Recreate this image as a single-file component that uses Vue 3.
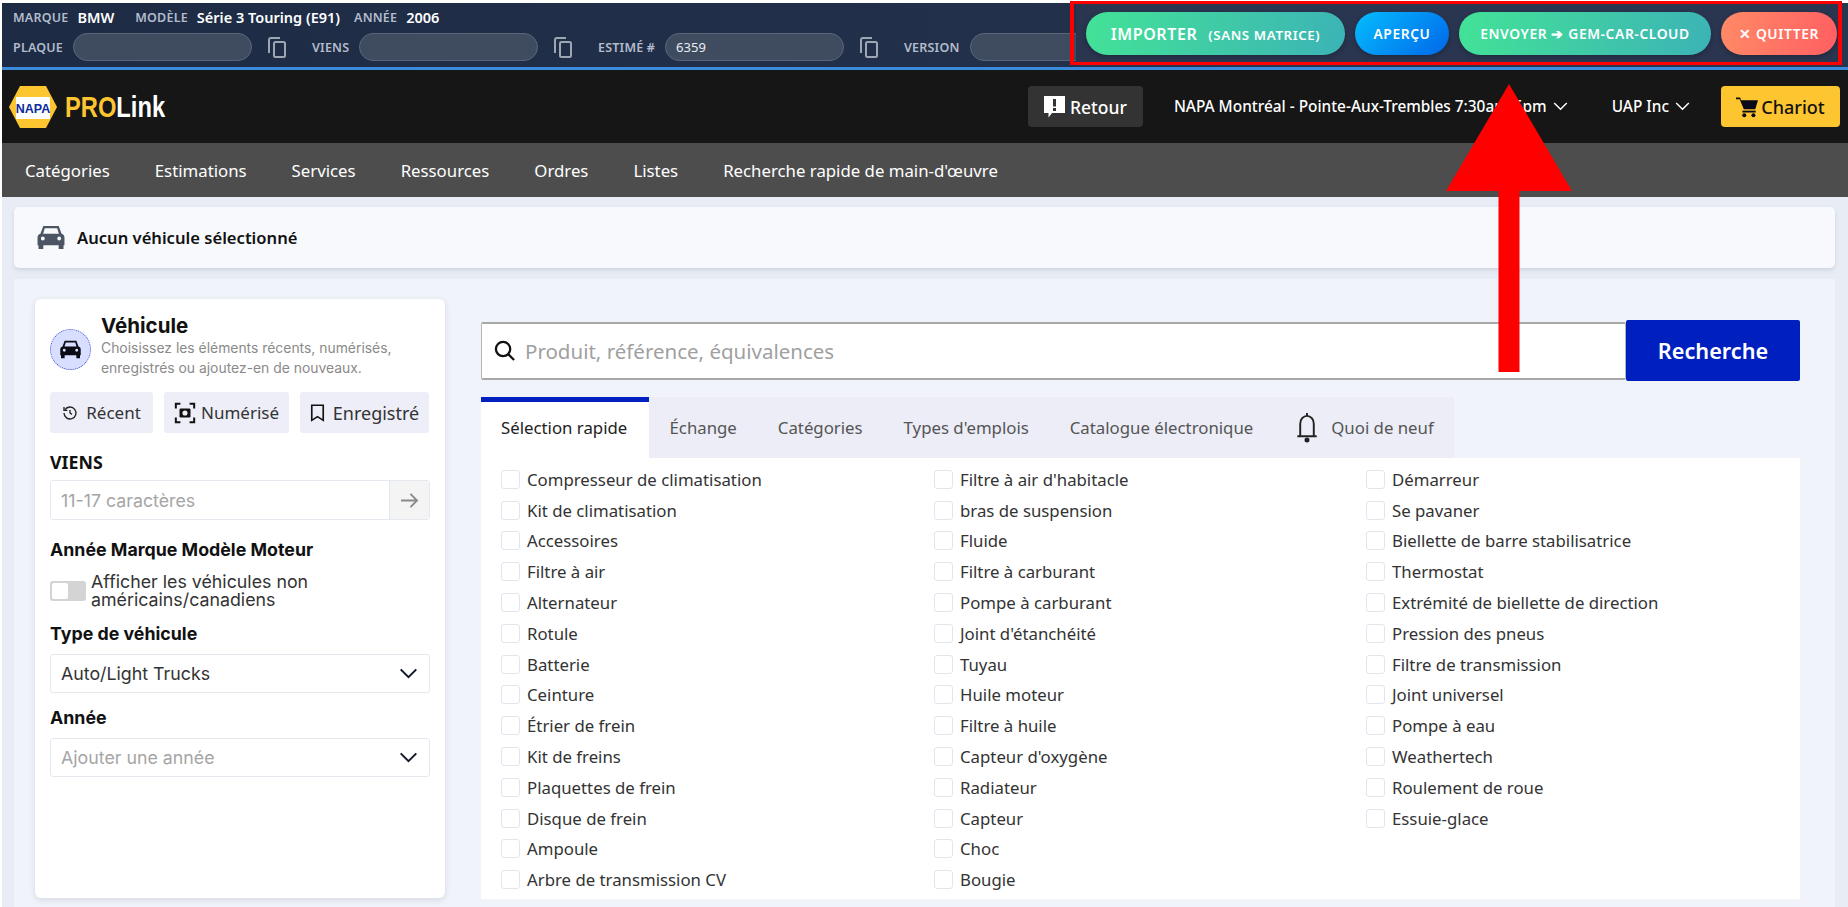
<template>
  <div class="page">
    <div class="topbar">
      <div class="top-info">
        <div class="info-row">
          <span class="lbl">MARQUE</span><b class="val val-marque">BMW</b>
          <span class="lbl">MODÈLE</span><b class="val val-modele">Série 3 Touring (E91)</b>
          <span class="lbl">ANNÉE</span><b class="val">2006</b>
        </div>
        <div class="field-row">
          <div v-for="f in topFields" :key="f.label" class="field" :class="f.cls">
            <span class="lbl">{{ f.label }}</span>
            <div class="pill">{{ f.value }}</div>
            <svg class="copy" viewBox="0 0 18 21" width="18" height="21" fill="none" stroke="#9ea6b4" stroke-width="2">
              <path d="M12 1H3a2 2 0 0 0-2 2v13" />
              <rect x="6" y="5" width="11" height="15" rx="1.500" />
            </svg>
          </div>
        </div>
      </div>
      <div class="actions">
        <button class="act act-import"><span class="big">IMPORTER</span><span class="small">(SANS MATRICE)</span></button>
        <button class="act act-preview">APERÇU</button>
        <button class="act act-send">ENVOYER ➔ GEM-CAR-CLOUD</button>
        <button class="act act-quit">✕ QUITTER</button>
      </div>
    </div>

    <header class="header">
      <div class="logo">
        <svg viewBox="0 0 48 42" width="48" height="42">
          <polygon points="11,0 37,0 48,21 37,42 11,42 0,21" fill="#fdc52f" />
          <rect x="7" y="11" width="34" height="22" fill="#fff" />
          <text x="24" y="27" text-anchor="middle" class="napa">NAPA</text>
        </svg>
        <span class="brand"><span class="pro">PRO</span>Link</span>
      </div>
      <div class="head-right">
        <button class="retour">
          <svg viewBox="0 0 21 22" width="21" height="22">
            <path d="M0 0h21v17H8l-3.500 4.500V17H0z" fill="#fff" />
            <rect x="9" y="3" width="3" height="7.500" fill="#333" />
            <rect x="9" y="12" width="3" height="3" fill="#333" />
          </svg>
          Retour
        </button>
        <div class="drop store">
          NAPA Montréal - Pointe-Aux-Trembles 7:30am-5pm
          <svg viewBox="0 0 16 10" width="15" height="9" fill="none" stroke="#fff" stroke-width="1.6"><path d="M1 1l7 7 7-7" /></svg>
        </div>
        <div class="drop uap">
          UAP Inc
          <svg viewBox="0 0 16 10" width="15" height="9" fill="none" stroke="#fff" stroke-width="1.6"><path d="M1 1l7 7 7-7" /></svg>
        </div>
        <button class="cart">
          <svg viewBox="0 0 24 24" width="22" height="22" fill="#0a0a1a">
            <path d="M0 1.500h4.500l1 3H24l-3 10H8.500L4 3.500H0z" />
            <rect x="7" y="16" width="14.500" height="2" />
            <circle cx="9" cy="21" r="2.200" />
            <circle cx="19" cy="21" r="2.200" />
          </svg>
          Chariot
        </button>
      </div>
    </header>

    <nav class="nav">
      <a v-for="n in navItems" :key="n">{{ n }}</a>
    </nav>

    <main class="content">
      <div class="vehicle-bar">
        <svg viewBox="0 0 28 26" width="28" height="25" fill="#4b5563">
          <path fill-rule="evenodd" d="M6 1h16l3 8c2 .6 3 2 3 4v8h-1v4h-5v-4H6v4H1v-4H0v-8c0-2 1-3.400 3-4zM7.500 3.500 5.800 9h16.400l-1.700-5.500zM5.500 12a2 2 0 1 0 0 4 2 2 0 0 0 0-4zm17 0a2 2 0 1 0 0 4 2 2 0 0 0 0-4z" />
        </svg>
        <span>Aucun véhicule sélectionné</span>
      </div>

      <div class="panel">
        <aside class="side">
          <div class="side-head">
            <div class="circle">
              <svg viewBox="0 0 28 26" width="21" height="19" fill="#0b0b14">
                <path fill-rule="evenodd" d="M6 1h16l3 8c2 .6 3 2 3 4v8h-1v4h-5v-4H6v4H1v-4H0v-8c0-2 1-3.400 3-4zM7.500 3.500 5.800 9h16.400l-1.700-5.500zM5.500 12a2 2 0 1 0 0 4 2 2 0 0 0 0-4zm17 0a2 2 0 1 0 0 4 2 2 0 0 0 0-4z" />
              </svg>
            </div>
            <div>
              <h2>Véhicule</h2>
              <p>Choisissez les éléments récents, numérisés, enregistrés ou ajoutez-en de nouveaux.</p>
            </div>
          </div>

          <div class="side-btns">
            <button class="b-recent">
              <svg viewBox="0 0 24 24" width="16" height="16" fill="none" stroke="#222" stroke-width="2">
                <path d="M4.500 7A9 9 0 1 1 3 12" /><path d="M3 3v5h5" /><path d="M12 7.500V12l3 2" />
              </svg>
              Récent
            </button>
            <button class="b-scan">
              <svg viewBox="0 0 24 24" width="22" height="22" fill="none" stroke="#111" stroke-width="2.200">
                <path d="M2 7V2h5M17 2h5v5M22 17v5h-5M7 22H2v-5" />
                <rect x="6" y="7" width="12" height="10" rx="1.500" fill="#111" stroke="none" />
                <circle cx="12" cy="12" r="2.800" fill="#eeeef8" stroke="none" />
              </svg>
              Numérisé
            </button>
            <button class="b-saved">
              <svg viewBox="0 0 18 22" width="15" height="18" fill="none" stroke="#111" stroke-width="2">
                <path d="M2 1.500h14V20l-7-4.500L2 20z" />
              </svg>
              Enregistré
            </button>
          </div>

          <label class="lab lab-vin">VIENS</label>
          <div class="vin">
            <span class="ph">11-17 caractères</span>
            <div class="vin-go">
              <svg viewBox="0 0 20 18" width="19" height="17" fill="none" stroke="#8a8a8a" stroke-width="2"><path d="M1 9h17M11 2l7 7-7 7" /></svg>
            </div>
          </div>

          <label class="lab lab-ymm">Année Marque Modèle Moteur</label>
          <div class="toggle-row">
            <span class="toggle"><i></i></span>
            <span class="toggle-txt">Afficher les véhicules non américains/canadiens</span>
          </div>

          <label class="lab lab-type">Type de véhicule</label>
          <div class="sel">
            <span>Auto/Light Trucks</span>
            <svg viewBox="0 0 20 12" width="19" height="11" fill="none" stroke="#111827" stroke-width="2.200"><path d="M1.500 1.500 10 10l8.500-8.500" /></svg>
          </div>

          <label class="lab lab-year">Année</label>
          <div class="sel">
            <span class="ph">Ajouter une année</span>
            <svg viewBox="0 0 20 12" width="19" height="11" fill="none" stroke="#111827" stroke-width="2.200"><path d="M1.500 1.500 10 10l8.500-8.500" /></svg>
          </div>
        </aside>

        <section class="main">
          <div class="search">
            <div class="search-box">
              <svg viewBox="0 0 22 22" width="21" height="21" fill="none" stroke="#111" stroke-width="2.400">
                <circle cx="9.500" cy="9.500" r="7.500" /><path d="M15 15l6 6" />
              </svg>
              <span>Produit, référence, équivalences</span>
            </div>
            <button class="search-btn">Recherche</button>
          </div>

          <div class="tabs">
            <div class="tab active">Sélection rapide</div>
            <div class="tab">Échange</div>
            <div class="tab">Catégories</div>
            <div class="tab">Types d'emplois</div>
            <div class="tab">Catalogue électronique</div>
            <div class="tab tab-new">
              <svg viewBox="0 0 24 32" width="26" height="31" fill="none" stroke="#222" stroke-width="2">
                <path d="M12 1v3M5 24V12a7 8 0 0 1 14 0v12M2 25h20" /><circle cx="12" cy="29" r="1.600" fill="#222" />
              </svg>
              Quoi de neuf
            </div>
          </div>

          <div class="checks">
            <label v-for="c in checks" :key="c" class="check">
              <span class="box"></span>{{ c }}
            </label>
          </div>
        </section>
      </div>
    </main>

    <div class="red-box"></div>
    <svg class="red-arrow" viewBox="0 0 126 288" width="126" height="288">
      <polygon points="63,0 126,107 73.500,107 73.500,288 52.500,288 52.500,107 0,107" fill="#ff0000" />
    </svg>
  </div>
</template>

<script setup>
const topFields = [
  { label: 'PLAQUE', value: '', cls: 'f-plaque' },
  { label: 'VIENS', value: '', cls: 'f-viens' },
  { label: 'ESTIMÉ #', value: '6359', cls: 'f-estime' },
  { label: 'VERSION', value: '', cls: 'f-version' }
]

const navItems = [
  'Catégories',
  'Estimations',
  'Services',
  'Ressources',
  'Ordres',
  'Listes',
  "Recherche rapide de main-d'œuvre"
]

const checks = [
  'Compresseur de climatisation', 'Kit de climatisation', 'Accessoires', 'Filtre à air', 'Alternateur',
  'Rotule', 'Batterie', 'Ceinture', 'Étrier de frein', 'Kit de freins', 'Plaquettes de frein',
  'Disque de frein', 'Ampoule', 'Arbre de transmission CV',
  "Filtre à air d'habitacle", 'bras de suspension', 'Fluide', 'Filtre à carburant', 'Pompe à carburant',
  "Joint d'étanchéité", 'Tuyau', 'Huile moteur', 'Filtre à huile', "Capteur d'oxygène", 'Radiateur',
  'Capteur', 'Choc', 'Bougie',
  'Démarreur', 'Se pavaner', 'Biellette de barre stabilisatrice', 'Thermostat',
  'Extrémité de biellette de direction', 'Pression des pneus', 'Filtre de transmission', 'Joint universel',
  'Pompe à eau', 'Weathertech', 'Roulement de roue', 'Essuie-glace'
]
</script>

<style>
html, body {
  margin: 0;
  background: #fff;
  overflow: hidden;
}
</style>

<style scoped>
.page {
  position: relative;
  width: 1848px;
  height: 907px;
  box-sizing: border-box;
  padding: 3px 0 0 2px;
  overflow: hidden;
  font-family: "Noto Sans", "Open Sans", sans-serif;
  color: #222;
}

button {
  border: none;
  font-family: inherit;
}

.topbar {
  display: flex;
  height: 64px;
  background: linear-gradient(90deg, #1d2b45, #27344f);
  border-bottom: 3px solid #3b8bdc;
  overflow: hidden;
}

.top-info {
  flex: 1;
  padding: 5px 0 0 11px;
  min-width: 0;
  overflow: hidden;
}

.info-row {
  display: flex;
  align-items: center;
  height: 18px;
  white-space: nowrap;
}

.lbl {
  color: #b3bccb;
  font-size: 12.500px;
  font-weight: 600;
  letter-spacing: 0.2px;
}

.val {
  color: #fff;
  font-size: 14.500px;
  font-weight: 600;
  margin-left: 9px;
}

.val-marque {
  margin-right: 21px;
}

.val-modele {
  margin-right: 14px;
}

.field-row {
  display: flex;
  align-items: center;
  margin-top: 7px;
}

.field {
  display: flex;
  align-items: center;
  flex: none;
}

.f-plaque {
  width: 299px;
}

.f-viens {
  width: 286px;
}

.f-estime {
  width: 306px;
}

.pill {
  width: 179px;
  height: 28px;
  box-sizing: border-box;
  margin-left: 10px;
  padding: 0 10px;
  line-height: 27px;
  font-size: 13px;
  color: #e8ecf2;
  background: #3f4c60;
  border: 1px solid #59667a;
  border-radius: 14px;
}

.copy {
  margin-left: 16px;
}

.actions {
  flex: none;
  width: 772px;
  height: 63px;
  box-sizing: border-box;
  display: flex;
  align-items: center;
  gap: 10px;
  padding: 0 5px 2px 10px;
  background: #2a3550;
}

.act {
  height: 43px;
  border-radius: 22px;
  color: #fff;
  font-weight: 600;
  font-size: 13.800px;
  letter-spacing: 0.6px;
  white-space: nowrap;
  padding: 0;
  box-shadow: 0 2px 5px rgba(0, 0, 0, 0.25);
}

.act-import {
  width: 259px;
  background: linear-gradient(100deg, #43e297, #3cb3b6);
}

.act-import .big {
  font-size: 16px;
  margin-right: 11px;
}

.act-import .small {
  font-size: 13.300px;
}

.act-preview {
  width: 94px;
  background: linear-gradient(135deg, #05bdfd, #0066ea);
}

.act-send {
  width: 252px;
  background: linear-gradient(100deg, #43e297, #3cb3b6);
}

.act-quit {
  width: 116px;
  background: linear-gradient(100deg, #ff8a66, #ff5f62);
}

.header {
  display: flex;
  align-items: center;
  justify-content: space-between;
  height: 73px;
  background: #161616;
  padding: 0 8px 0 7px;
}

.logo {
  display: flex;
  align-items: center;
  gap: 8px;
}

.napa {
  font-family: "Liberation Sans", sans-serif;
  font-size: 12.500px;
  font-weight: 700;
  fill: #0a2a9c;
}

.brand {
  display: block;
  width: 100px;
  color: #fff;
  font-family: "Liberation Sans", sans-serif;
  font-size: 30px;
  font-weight: 700;
  white-space: nowrap;
  transform: scaleX(0.79);
  transform-origin: left center;
}

.pro {
  color: #fdc52f;
}

.head-right {
  display: flex;
  align-items: center;
  height: 41px;
}

.retour {
  display: flex;
  align-items: center;
  justify-content: center;
  gap: 5px;
  width: 115px;
  height: 41px;
  background: #333;
  border-radius: 4px;
  color: #fff;
  font-size: 17.500px;
  font-weight: 500;
}

.drop {
  display: flex;
  align-items: center;
  gap: 6px;
  color: #fff;
  font-size: 15.400px;
  font-weight: 500;
  white-space: nowrap;
}

.store {
  margin-left: 31px;
}

.uap {
  margin-left: 44px;
}

.cart {
  display: flex;
  align-items: center;
  justify-content: center;
  gap: 3px;
  width: 119px;
  height: 41px;
  margin-left: 31px;
  background: #fdc52f;
  border-radius: 4px;
  color: #111;
  font-size: 18px;
  font-weight: 500;
}

.nav {
  display: flex;
  align-items: center;
  gap: 45px;
  height: 54px;
  padding-left: 23px;
  background: #4d4d4d;
}

.nav a {
  color: #fff;
  font-size: 16.800px;
  white-space: nowrap;
}

.content {
  height: 710px;
  padding: 10px 13px 0 12px;
  background: #e8edf5;
}

.vehicle-bar {
  display: flex;
  align-items: center;
  gap: 12px;
  height: 61px;
  padding-left: 23px;
  background: #f8f9fc;
  border-radius: 5px;
  box-shadow: 0 2px 4px rgba(60, 70, 100, 0.15);
  font-size: 16.600px;
  font-weight: 600;
  color: #111;
}

.panel {
  display: flex;
  align-items: flex-start;
  margin-top: 11px;
  padding: 20px 35px 0 21px;
  height: 640px;
  background: #f0f3f9;
}

.side {
  flex: none;
  width: 410px;
  height: 599px;
  box-sizing: border-box;
  padding: 15px 15px 0;
  background: #fff;
  border-radius: 6px;
  box-shadow: 0 2px 6px rgba(60, 70, 100, 0.15);
  font-family: Inter, "Noto Sans", sans-serif;
}

.side-head {
  display: flex;
  align-items: center;
  gap: 10px;
}

.circle {
  flex: none;
  width: 41px;
  height: 41px;
  box-sizing: border-box;
  display: flex;
  align-items: center;
  justify-content: center;
  margin-top: 6px;
  background: #d8deff;
  border: 1px dotted #4150d0;
  border-radius: 50%;
}

.side-head h2 {
  margin: 0;
  font-size: 20.500px;
  line-height: 24px;
  font-weight: 700;
  color: #111;
}

.side-head p {
  margin: 0;
  font-size: 13.900px;
  line-height: 20px;
  color: #8a8a8a;
}

.side-btns {
  display: flex;
  gap: 11px;
  margin-top: 14px;
}

.side-btns button {
  display: flex;
  align-items: center;
  justify-content: center;
  gap: 5px;
  height: 41px;
  background: #eeeef8;
  border-radius: 3px;
  color: #333;
  font-family: "Noto Sans", sans-serif;
  font-size: 17px;
  padding: 0;
}

.side-btns .b-recent {
  width: 103px;
  gap: 8px;
}

.b-scan {
  width: 125px;
}

.side-btns .b-saved {
  width: 129px;
  gap: 8px;
  font-size: 18px;
}

.lab {
  display: block;
  font-size: 17.800px;
  line-height: 20px;
  font-weight: 700;
  color: #111;
}

.lab-vin {
  margin-top: 19px;
  font-family: "Noto Sans", sans-serif;
}

.vin {
  display: flex;
  align-items: center;
  justify-content: space-between;
  height: 40px;
  margin-top: 8px;
  padding-left: 10px;
  border: 1px solid #e4e8ef;
  border-radius: 3px;
}

.ph {
  color: #a5a5a5;
}

.vin, .sel {
  box-sizing: border-box;
  font-size: 17.800px;
}

.vin-go {
  display: flex;
  align-items: center;
  justify-content: center;
  width: 39px;
  height: 38px;
  background: #f4f4f4;
  border-left: 1px solid #e4e8ef;
}

.lab-ymm {
  margin-top: 20px;
}

.toggle-row {
  display: flex;
  align-items: center;
  gap: 5px;
  margin-top: 13px;
  font-size: 17.800px;
  line-height: 18px;
  color: #333;
}

.toggle {
  flex: none;
  display: block;
  width: 36px;
  height: 20px;
  box-sizing: border-box;
  padding: 2px;
  background: #d4d4d4;
  border-radius: 3px;
}

.toggle i {
  display: block;
  width: 16px;
  height: 16px;
  background: #fff;
  border-radius: 2px;
}

.lab-type {
  margin-top: 15px;
}

.sel {
  display: flex;
  align-items: center;
  justify-content: space-between;
  height: 39px;
  margin-top: 10px;
  padding: 0 11px 0 10px;
  border: 1px solid #e4e8ef;
  border-radius: 3px;
  color: #333;
}

.lab-year {
  margin-top: 15px;
}

.main {
  flex: none;
  width: 1319px;
  margin-left: 36px;
  margin-top: 21px;
}

.search {
  display: flex;
  align-items: center;
}

.search-box {
  flex: 1;
  display: flex;
  align-items: center;
  gap: 10px;
  height: 58px;
  box-sizing: border-box;
  padding-left: 12px;
  background: #fff;
  border: 1px solid #b5b5b5;
  border-top: 2px solid #a8a8a8;
  border-bottom: 2px solid #a8a8a8;
  border-radius: 2px;
  font-size: 20.500px;
  color: #a0a0a0;
}

.search-btn {
  flex: none;
  width: 174px;
  height: 61px;
  background: #001fbf;
  border-radius: 2px;
  color: #fff;
  font-size: 21.700px;
  font-weight: 600;
}

.tabs {
  display: flex;
  width: 978px;
  height: 61px;
  margin-top: 16px;
  background: #ecedf7;
  width: 973px;
}

.tab {
  display: flex;
  align-items: center;
  padding: 0 20.500px;
  font-size: 16.800px;
  color: #555;
  white-space: nowrap;
}

.tab.active {
  width: 168px;
  box-sizing: border-box;
  padding: 0 0 5px 20px;
  background: #fff;
  border-top: 5px solid #0020c0;
  color: #222;
}

.tab.tab-new {
  gap: 11px;
  padding-right: 0;
}

.checks {
  display: grid;
  grid-template-columns: 433px 432px 1fr;
  grid-template-rows: repeat(14, 30.800px);
  grid-auto-flow: column;
  height: 441px;
  box-sizing: border-box;
  padding: 6px 0 0 20px;
  background: #fff;
}

.check {
  display: flex;
  align-items: center;
  gap: 7px;
  font-size: 16.800px;
  color: #333;
  white-space: nowrap;
}

.box {
  flex: none;
  width: 19px;
  height: 19px;
  box-sizing: border-box;
  background: #fff;
  border: 1px solid #e2e5ee;
  border-radius: 3px;
}

.red-box {
  position: absolute;
  left: 1070px;
  top: 1px;
  width: 772px;
  height: 64px;
  box-sizing: border-box;
  border-style: solid;
  border-color: #f00;
  border-width: 3px 4px;
  pointer-events: none;
}

.red-arrow {
  position: absolute;
  left: 1446px;
  top: 84px;
  pointer-events: none;
}
</style>
